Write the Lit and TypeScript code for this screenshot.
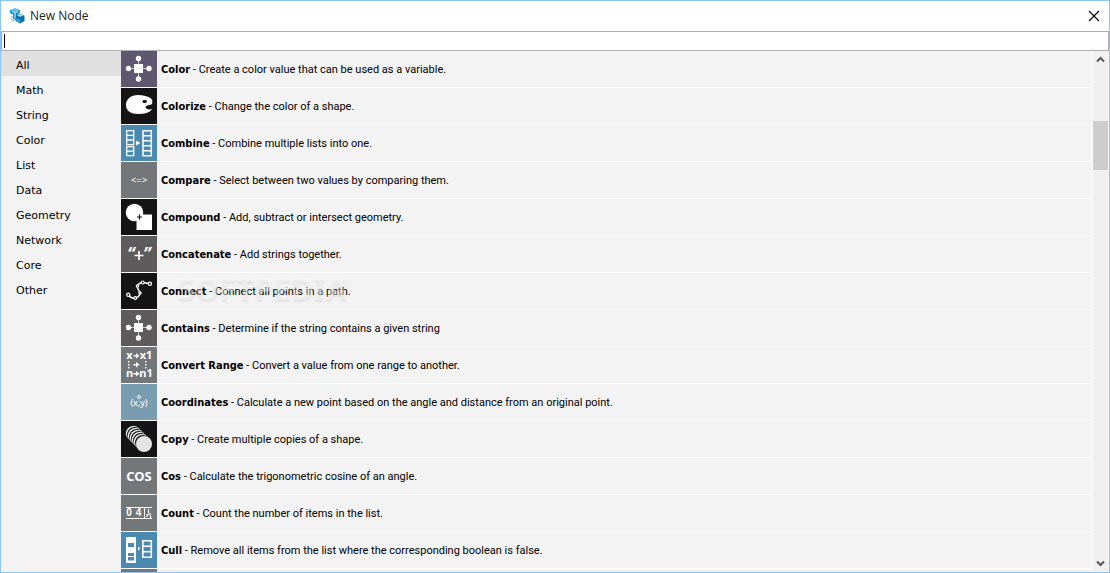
import { LitElement, html, css, svg, type SVGTemplateResult } from "lit";
import { customElement, state } from "lit/decorators.js";
import { classMap } from "lit/directives/class-map.js";

interface NodeEntry {
  name: string;
  text: string;
  tone: string;
  icon: SVGTemplateResult;
}

const hub = svg`
  <path d="M17.5 7v21M7 17.5h21" stroke="#cfcdd3" fill="none"/>
  <rect x="13" y="13" width="9" height="9" fill="#fff"/>
  <g fill="#fff"><circle cx="17.5" cy="7.5" r="2.7"/><circle cx="17.5" cy="28" r="2.7"/>
  <circle cx="7.5" cy="17.5" r="2.7"/><circle cx="28" cy="17.5" r="2.7"/></g>`;

const palette = svg`
  <path fill="#fff" d="M30.500 11C27 8 22 7 17 7C10 7 5 11 5 17C5 23 10 26 17 26C23 26 29 25 31 21C28 22 24.500 21 24.500 19C25 17 29 17.500 31 16C31.500 14 31.500 12 30.500 11Z"/>
  <path fill="#141414" d="M21 13q2.500-1.500 5-0.500l-0.500 2q-2.500 1-3.500 0z"/>`;

const combine = svg`
  <g fill="none" stroke="#fff" stroke-width="1.3">
  <path d="M5.700 5.700h7v14h-7zM5.700 10.400h7M5.700 15h7M5.700 21.700h7v9h-7zM5.700 26.200h7"/>
  <path d="M22 5.700h8.300v25H22zM22 10.700h8.300M22 15.700h8.300M22 20.700h8.300M22 25.700h8.300" stroke-width="1.500"/></g>
  <path d="M15 15.500l4.500 2.500-4.500 2.500z" fill="#fff"/>`;

const compare = svg`<text x="18" y="21" class="mono">&lt;=&gt;</text>`;

const compound = svg`
  <circle cx="13.500" cy="13.500" r="8.700" fill="#fff"/><rect x="15.500" y="15.500" width="15.500" height="15.500" fill="#fff"/>
  <path d="M18.500 15.500v5M16 18h5" stroke="#141414" stroke-width="1.200" fill="none"/>`;

const concat = svg`
  <text x="10" y="24" class="quote">“</text><text x="26" y="24" class="quote">”</text>
  <path d="M18 15v9M13.500 19.500h9" stroke="#fff" stroke-width="1.700" fill="none"/>`;

const connect = svg`
  <g fill="none" stroke="#fff" stroke-width="1.500">
  <path d="M7.500 22C9 24 11 25.500 14.300 25.200C17 25 19 22 19 20C18.500 17.500 15.500 15.500 16.500 13C17.500 11 19 9.500 21.700 9.500L28.700 10.800"/>
  <g fill="#141414" stroke-width="1.200"><circle cx="7.300" cy="21.800" r="1.600"/><circle cx="14.300" cy="25" r="1.400"/><circle cx="19" cy="20" r="1.200"/>
  <circle cx="16.500" cy="13" r="1.200"/><circle cx="21.700" cy="9.500" r="1.500"/><circle cx="28.900" cy="10.800" r="1.600"/></g></g>`;

const range = svg`
  <text x="8.500" y="12" class="tag">x</text><text x="25" y="12" class="tag">x1</text>
  <text x="8.500" y="30" class="tag">n</text><text x="25" y="30" class="tag">n1</text>
  <g fill="#fff"><path d="M12.500 8h2.500v-2l3.500 2.700-3.500 2.700v-2h-2.500zM12.500 17h2.500v-2l3.500 2.700-3.500 2.700v-2h-2.500zM12.500 26h2.500v-2l3.500 2.700-3.500 2.700v-2h-2.500z"/>
  <path d="M7 14h1.500v1.500H7zM7 17h1.500v1.500H7zM7 20h1.500v1.500H7zM24 14h1.500v1.500H24zM24 17h1.500v1.500H24zM24 20h1.500v1.500H24z"/></g>`;

const coords = svg`
  <circle cx="18" cy="13" r="1.500" fill="none" stroke="#fff"/><text x="18" y="22" class="small">(x,y)</text>`;

const copy = svg`
  <g fill="#fff">${[12.5, 14.5, 16.5, 18.5, 20.5].map((c) => svg`
    <circle cx=${c} cy=${c} r="7.6"/><circle cx=${c + 1} cy=${c + 1} r="7.5" fill="#141414"/>`)}</g>
  <circle cx="23" cy="23" r="8" fill="#e4e4e6"/>`;

const cos = svg`<text x="18" y="23" class="word">COS</text>`;

const count = svg`
  <path d="M5 12.500h26M5 23.500h26M23.500 13v10" stroke="#fff" fill="none"/>
  <text x="8" y="21" class="digit">0</text><text x="17.500" y="21" class="digit">4</text>
  <path d="M27.500 14v4M26 22v-2l4-1.500M29.500 20v3" stroke="#fff" stroke-width="1.200" fill="none"/>`;

const cull = svg`
  <rect x="5" y="5" width="10" height="26" fill="#fff"/>
  <path d="M7 11h6v4H7zM7 21h6v3H7zM7 25h6v3.500H7z" fill="#4a8ab0"/>
  <path d="M17 14.500l2.500 2L17 18.500z" fill="#fff"/>
  <path d="M21.800 8.800h8.500v16.500h-8.500zM22 14.200h8M22 19.700h8" stroke="#fff" stroke-width="1.600" fill="none"/>`;

const NODES: NodeEntry[] = [
  { name: "Color", text: "Create a color value that can be used as a variable.", tone: "violet", icon: hub },
  { name: "Colorize", text: "Change the color of a shape.", tone: "black", icon: palette },
  { name: "Combine", text: "Combine multiple lists into one.", tone: "blue", icon: combine },
  { name: "Compare", text: "Select between two values by comparing them.", tone: "gray", icon: compare },
  { name: "Compound", text: "Add, subtract or intersect geometry.", tone: "black", icon: compound },
  { name: "Concatenate", text: "Add strings together.", tone: "dark", icon: concat },
  { name: "Connect", text: "Connect all points in a path.", tone: "black", icon: connect },
  { name: "Contains", text: "Determine if the string contains a given string", tone: "dark", icon: hub },
  { name: "Convert Range", text: "Convert a value from one range to another.", tone: "gray", icon: range },
  { name: "Coordinates", text: "Calculate a new point based on the angle and distance from an original point.", tone: "pale", icon: coords },
  { name: "Copy", text: "Create multiple copies of a shape.", tone: "black", icon: copy },
  { name: "Cos", text: "Calculate the trigonometric cosine of an angle.", tone: "gray", icon: cos },
  { name: "Count", text: "Count the number of items in the list.", tone: "gray", icon: count },
  { name: "Cull", text: "Remove all items from the list where the corresponding boolean is false.", tone: "blue", icon: cull },
];

const CATEGORIES = ["All", "Math", "String", "Color", "List", "Data", "Geometry", "Network", "Core", "Other"];

@customElement("node-row")
class NodeRow extends LitElement {
  static properties = { entry: { attribute: false } };
  declare entry: NodeEntry;

  static styles = css`
    :host { display: flex; align-items: center; height: 36px; flex: none; border-bottom: 1px solid #fff;
      color: #000; white-space: nowrap; }
    svg { width: 36px; height: 36px; flex: none; margin-right: 4px; }
    .violet { background: #5f5770; } .black { background: #141414; } .blue { background: #4a8ab0; }
    .gray { background: #737779; } .dark { background: #5e5b5c; } .pale { background: #7a9cb0; }
    .label { font: 11px/16px Roboto, sans-serif; padding-top: 2px; }
    .label b { font-family: "DejaVu Sans Condensed", sans-serif; }
    text { fill: #fff; text-anchor: middle; font-family: "Noto Sans", sans-serif; }
    .mono { font: 9px "Liberation Mono", monospace; }
    .quote { font: italic bold 17px "Noto Sans", sans-serif; }
    .tag { font: bold 11px "Noto Sans", sans-serif; }
    .small { font-size: 9px; }
    .word { font: bold 13px "Noto Sans", sans-serif; }
    .digit { font: bold 10px "Liberation Sans", sans-serif; }
  `;

  render() {
    const { name, text, tone, icon } = this.entry;
    return html`<svg class=${tone} viewBox="0 0 36 36" aria-hidden="true">${icon}</svg
      ><span class="label"><b>${name}</b> - ${text}</span>`;
  }
}

@customElement("app-root")
class AppRoot extends LitElement {
  @state() private category = "All";

  static styles = css`
    :host { display: flex; flex-direction: column; height: 100vh; box-sizing: border-box; border: 1px solid #8ac6f8;
      background: #f3f3f3; overflow: hidden; }
    button { border: 0; padding: 0; background: none; display: block; }
    header { display: flex; align-items: center; height: 30px; flex: none; background: #fff; padding: 0 9px 0 8px; }
    .logo { width: 16px; height: 16px; margin-right: 5px; }
    h1 { margin: 0; flex: 1; font: 400 12px/16px "Open Sans", sans-serif; color: #222; }
    .close { width: 12px; height: 12px; }
    .close svg { display: block; }
    .search { flex: none; box-sizing: border-box; width: 100%; height: 20px; margin: 0; padding: 0 4px; outline: 0;
      border: 1px solid #abadb3; border-radius: 0; font: 11px Roboto, sans-serif; caret-color: transparent;
      background: #fff linear-gradient(#000, #000) 2px 2px / 1px 14px no-repeat; }
    main { flex: 1; min-height: 0; display: flex; }
    nav { width: 120px; flex: none; }
    .category { width: 100%; height: 25px; padding: 5px 0 0 15px; text-align: left; color: #000;
      font: 11px/16px "DejaVu Sans", sans-serif; }
    .selected { background: #e0e0e0; }
    .list { flex: 1; min-width: 0; display: flex; flex-direction: column; overflow: hidden; position: relative;
      border-right: 1px solid #fff; }
    .next { height: 37px; width: 36px; flex: none; background: #737779; }
    .mark { position: absolute; left: 57px; top: 219px; font: bold 31px/36px "Noto Sans", sans-serif;
      color: rgba(250, 250, 250, 0.45); text-shadow: 0 2px 2px rgba(0, 0, 0, 0.07); pointer-events: none; white-space: nowrap; }
    .mark sup { font-size: 10px; line-height: 10px; vertical-align: 14px; margin-left: -6px; }
    .scroll { width: 15px; flex: none; background: #f0f0f0; display: flex; flex-direction: column; margin-right: 1px; }
    .arrow { width: 15px; height: 17px; flex: none; }
    .arrow svg { display: block; margin: auto; }
    .track { flex: 1; display: flex; flex-direction: column; }
    .before { flex: 53; }
    .thumb { flex: 49; background: #cdcdcd; }
    .after { flex: 384; }
  `;

  render() {
    return html`
      <header>
        <svg class="logo" viewBox="0 0 16 16" aria-hidden="true">
          <path d="M1 2l5-1.500 5 1.500v3l-2 1v5L6.500 12 4 10.500v-4L1 5z" fill="#1593cf"/>
          <path d="M1 2.200l5 1.300 5-1.300L6 0z" fill="#5cc4f0"/>
          <path d="M3 3.500l3 1 3-1M6 5v5.500" stroke="#d9f3ff" stroke-width="1" fill="none"/>
          <path d="M7 7.500l4-1.500 4.500 1.500v5.500L11 15.500 6.500 13z" fill="#0b6fae"/>
          <path d="M8 7.600l3 1.200 3.500-1.200L11 6.500z" fill="#b9e6fa"/>
          <path d="M7.500 10.500l3.500 1.200v3L7.500 13z" fill="#35aee6"/>
          <path d="M2 8.500l1.500 1M2 11l3 2" stroke="#35aee6" stroke-width="1" fill="none"/>
        </svg>
        <h1>New Node</h1>
        <button class="close" aria-label="Close">
          <svg width="12" height="12" viewBox="0 0 12 12"><path d="M1 1l10 10M11 1L1 11" stroke="#000" stroke-width="1.100"/></svg>
        </button>
      </header>
      <input class="search" type="text" aria-label="Search nodes" />
      <main>
        <nav aria-label="Categories">
          ${CATEGORIES.map((c) => html`<button
            class=${classMap({ category: true, selected: c === this.category })}
            @click=${() => (this.category = c)}>${c}</button>`)}
        </nav>
        <section class="list" aria-label="Nodes">
          ${NODES.map((n) => html`<node-row .entry=${n}></node-row>`)}
          <div class="next"></div>
          <div class="mark" aria-hidden="true">SOFTPEDIA<sup>®</sup></div>
        </section>
        <div class="scroll">
          <button class="arrow" aria-label="Scroll up">
            <svg width="9" height="7" viewBox="0 0 9 7"><path d="M1 5.500l3.500-3.500L8 5.500" fill="none" stroke="#555" stroke-width="2"/></svg>
          </button>
          <div class="track"><div class="before"></div><div class="thumb"></div><div class="after"></div></div>
          <button class="arrow" aria-label="Scroll down">
            <svg width="9" height="7" viewBox="0 0 9 7"><path d="M1 1.500L4.500 5 8 1.500" fill="none" stroke="#555" stroke-width="2"/></svg>
          </button>
        </div>
      </main>
    `;
  }
}
